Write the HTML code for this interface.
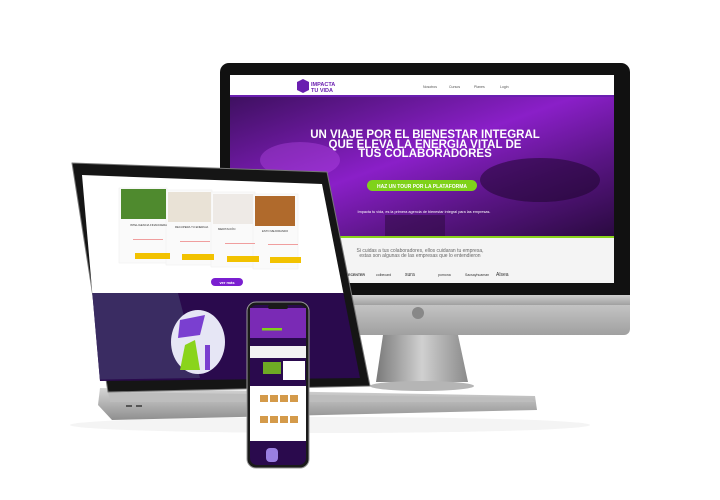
<!DOCTYPE html>
<html><head><meta charset="utf-8"><style>
html,body{margin:0;padding:0;background:#fff;width:720px;height:500px;overflow:hidden}
svg{display:block;font-family:"Liberation Sans",sans-serif}
</style></head><body>
<svg width="720" height="500" viewBox="0 0 720 500" xmlns="http://www.w3.org/2000/svg">
<defs>
<linearGradient id="chin" x1="0" y1="0" x2="0" y2="1"><stop offset="0" stop-color="#cfcfcf"/><stop offset="1" stop-color="#a0a0a0"/></linearGradient>
<linearGradient id="stand" x1="0" y1="0" x2="1" y2="0"><stop offset="0" stop-color="#7a7a7a"/><stop offset=".5" stop-color="#d0d0d0"/><stop offset="1" stop-color="#8a8a8a"/></linearGradient>
<linearGradient id="hero" x1="0" y1="0" x2="1" y2="1"><stop offset="0" stop-color="#3e1060"/><stop offset=".45" stop-color="#8a1fc8"/><stop offset=".7" stop-color="#5a1585"/><stop offset="1" stop-color="#2a0a40"/></linearGradient>
<linearGradient id="base" x1="0" y1="0" x2="0" y2="1"><stop offset="0" stop-color="#d5d5d5"/><stop offset="1" stop-color="#8f8f8f"/></linearGradient>
<clipPath id="lap"><polygon points="82,175 322,184 360,378 100,381"/></clipPath>
</defs>
<ellipse cx="330" cy="425" rx="260" ry="8" fill="#f4f4f4"/>
<!-- monitor -->
<rect x="220" y="63" width="410" height="272" rx="9" fill="#111"/>
<rect x="220" y="295" width="410" height="40" rx="6" fill="url(#chin)"/>
<rect x="220" y="295" width="410" height="10" fill="url(#chin)"/>
<circle cx="418" cy="313" r="6" fill="#888"/>
<polygon points="383,335 458,335 468,382 376,382" fill="url(#stand)"/>
<ellipse cx="422" cy="386" rx="52" ry="5" fill="#b5b5b5"/>
<rect x="230" y="75" width="384" height="21" fill="#fff"/>
<polygon points="297,82 303,79 309,82 309,90 303,93 297,90" fill="#6a1fb0"/>
<text x="311" y="86" font-size="5.5" font-weight="bold" fill="#6a1fb0">IMPACTA</text>
<text x="311" y="92" font-size="5.5" font-weight="bold" fill="#6a1fb0">TU VIDA</text>
<g font-size="3.5" fill="#555"><text x="423" y="88">Nosotros</text><text x="449" y="88">Cursos</text><text x="474" y="88">Planes</text><text x="500" y="88">Login</text></g>
<rect x="230" y="95" width="384" height="2" fill="#6a1fb0"/>
<rect x="230" y="97" width="384" height="139" fill="url(#hero)"/>
<ellipse cx="300" cy="160" rx="40" ry="18" fill="#c050f0" opacity=".35"/>
<ellipse cx="540" cy="180" rx="60" ry="22" fill="#1a0428" opacity=".5"/>
<rect x="385" y="215" width="60" height="21" fill="#2a0a3a" opacity=".5"/>
<g font-size="11.5" font-weight="bold" fill="#fff" text-anchor="middle"><text x="425" y="138">UN VIAJE POR EL BIENESTAR INTEGRAL</text><text x="425" y="148">QUE ELEVA LA ENERGIA VITAL DE</text><text x="425" y="157">TUS COLABORADORES</text></g>
<rect x="367" y="180" width="110" height="11" rx="5.5" fill="#7fd21a"/>
<text x="422" y="188" font-size="5" font-weight="bold" fill="#fff" text-anchor="middle">HAZ UN TOUR POR LA PLATAFORMA</text>
<text x="424" y="213" font-size="3.8" fill="#fff" text-anchor="middle">Impacta tu vida, es la primera agencia de bienestar integral para las empresas.</text>
<rect x="230" y="236" width="384" height="2" fill="#8ad41c"/>
<rect x="230" y="238" width="384" height="45" fill="#f4f4f4"/>
<g font-size="5" fill="#666" text-anchor="middle"><text x="420" y="252">Si cuidas a tus colaboradores, ellos cuidaran tu empresa,</text><text x="420" y="257">estas son algunas de las empresas que lo entendieron</text></g>
<g font-size="5" fill="#333"><text x="340" y="276" font-weight="bold" font-size="3.5">HOMECENTER</text><text x="376" y="276" font-size="3.5">colbecard</text><text x="405" y="276">sura</text><text x="438" y="276" font-size="3.5">pomona</text><text x="465" y="276" font-size="3.5">Sacsayhuaman</text><text x="496" y="276">Alsea</text></g>
<!-- laptop base -->
<polygon points="100,388 535,396 537,410 112,420 98,405" fill="url(#base)"/>
<polygon points="108,392 530,398 535,402 110,402" fill="#bdbdbd"/>
<rect x="126" y="405" width="6" height="2" fill="#555"/><rect x="136" y="405" width="6" height="2" fill="#555"/>
<!-- laptop lid -->
<polygon points="72,163 327,172 370,386 108,392" fill="#151515" stroke="#777" stroke-width="1" stroke-linejoin="round"/>
<g clip-path="url(#lap)">
<rect x="70" y="170" width="310" height="124" fill="#fff"/>
<rect x="70" y="293" width="310" height="95" fill="#2a0a4d"/>
<polygon points="70,293 178,293 200,378 70,380" fill="#3a2c62"/>
<g>
<rect x="119" y="188" width="48" height="75" fill="#fafafa" stroke="#eee" stroke-width=".5"/>
<rect x="166" y="190" width="46" height="75" fill="#fafafa" stroke="#eee" stroke-width=".5"/>
<rect x="211" y="192" width="44" height="75" fill="#fafafa" stroke="#eee" stroke-width=".5"/>
<rect x="253" y="194" width="45" height="75" fill="#fafafa" stroke="#eee" stroke-width=".5"/>
<rect x="121" y="189" width="45" height="30" fill="#4f8a2e"/>
<rect x="168" y="192" width="43" height="30" fill="#e9e2d6"/>
<rect x="213" y="194" width="40" height="30" fill="#eeeae6"/>
<rect x="255" y="196" width="40" height="30" fill="#b06a2c"/>
<g font-size="2.8" fill="#333"><text x="130" y="226">INTELIGENCIA FINANCIERA</text><text x="175" y="228">RECUPERA TU ENERGIA</text><text x="218" y="230">MEDITACIÓN</text><text x="262" y="232">ESTO MEJORANDO</text></g>
<g fill="#e88"><rect x="133" y="239" width="30" height=".8"/><rect x="180" y="241" width="30" height=".8"/><rect x="225" y="243" width="30" height=".8"/><rect x="268" y="244" width="30" height=".8"/></g>
<rect x="135" y="253" width="35" height="6" fill="#f2c200"/>
<rect x="182" y="254" width="32" height="6" fill="#f2c200"/>
<rect x="227" y="256" width="32" height="6" fill="#f2c200"/>
<rect x="270" y="257" width="31" height="6" fill="#f2c200"/>
<rect x="211" y="278" width="32" height="8" rx="4" fill="#7a1fd0"/>
<text x="227" y="284" font-size="4" font-weight="bold" fill="#fff" text-anchor="middle">ver más</text>
<ellipse cx="198" cy="342" rx="27" ry="32" fill="#e6e6f5"/>
<polygon points="180,320 205,315 200,335 178,338" fill="#7a3fd0"/>
<polygon points="185,345 195,340 200,370 180,370" fill="#8ad41c"/>
<rect x="205" y="345" width="5" height="25" fill="#7a3fd0"/>
</g>
</g>
<!-- phone -->
<rect x="247" y="302" width="62" height="166" rx="9" fill="#1a1a1a" stroke="#999" stroke-width="1"/>
<rect x="250" y="305" width="56" height="160" rx="7" fill="#2a0a4d"/>
<rect x="250" y="308" width="56" height="30" fill="#7a2ab5"/>
<rect x="262" y="328" width="20" height="2.5" fill="#7fd21a"/>
<rect x="250" y="346" width="56" height="12" fill="#f2f2f2"/>
<rect x="263" y="362" width="18" height="12" fill="#7fd21a" opacity=".8"/>
<rect x="283" y="361" width="22" height="19" fill="#fff"/>
<rect x="250" y="386" width="56" height="55" fill="#fff"/>
<g fill="#d49a4a"><rect x="260" y="395" width="8" height="7"/><rect x="270" y="395" width="8" height="7"/><rect x="280" y="395" width="8" height="7"/><rect x="290" y="395" width="8" height="7"/><rect x="260" y="416" width="8" height="7"/><rect x="270" y="416" width="8" height="7"/><rect x="280" y="416" width="8" height="7"/><rect x="290" y="416" width="8" height="7"/></g>
<rect x="266" y="448" width="12" height="14" rx="4" fill="#9a7fe0"/>
<rect x="268" y="305" width="20" height="4" rx="2" fill="#1a1a1a"/>
</svg>
</body></html>
